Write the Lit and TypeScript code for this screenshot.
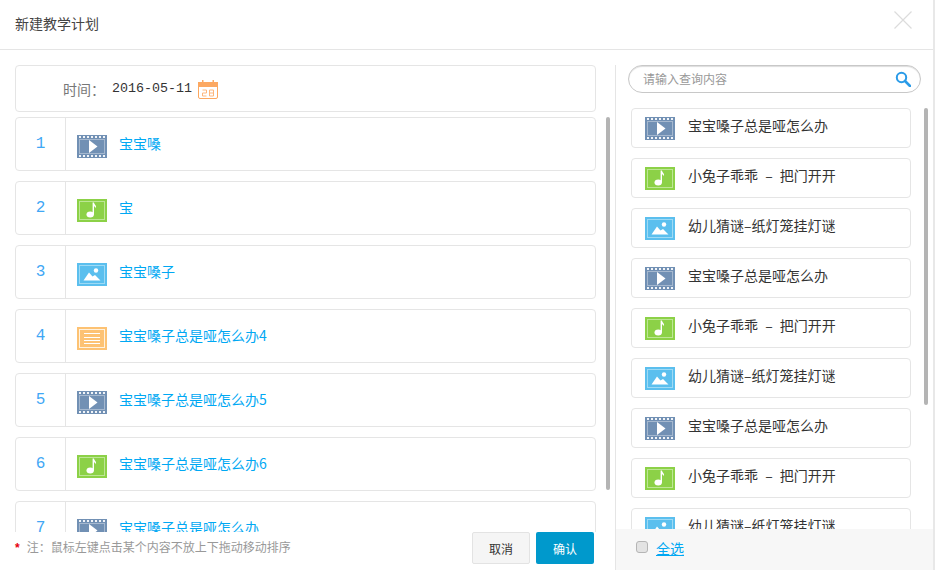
import { LitElement, html, css, svg } from "lit";
import { customElement } from "lit/decorators.js";

type Kind = "video" | "music" | "image" | "doc";

const dots = (y: number) =>
  [2, 6, 10, 14, 18, 22, 26].map((x) => svg`<rect x=${x} y=${y} width="2" height="2" fill="#fff" opacity="0.9"></rect>`);

const art: Record<Kind, unknown> = {
  video: svg`<rect width="30" height="23" fill="#7190b4"></rect>${dots(1)}${dots(20)}
    <rect x="2.5" y="4.5" width="25" height="14" fill="none" stroke="#a5b8cf"></rect>
    <path d="M12 5 L20.5 11.5 L12 18 Z" fill="#fff"></path>`,
  music: svg`<rect width="30" height="23" fill="#8cd147"></rect>
    <rect x="2.5" y="2.5" width="25" height="18" fill="none" stroke="#bde695"></rect>
    <ellipse cx="13.2" cy="15.6" rx="3.7" ry="3" fill="#fff"></ellipse>
    <path d="M15.6 15.5 L15.6 3.5 L17 3.5 C17.2 5.6 19.6 6 19 9.2 C18.4 8 17.8 7.4 17 7.2 L17 15.5 Z" fill="#fff"></path>`,
  image: svg`<rect width="30" height="23" fill="#5bbfee"></rect>
    <rect x="2.5" y="2.5" width="25" height="18" fill="none" stroke="#9ddaf5"></rect>
    <circle cx="19" cy="7.5" r="2.2" fill="#fff"></circle>
    <path d="M6.5 17.5 L12 9.5 L15.5 13.5 L18 12 L23.5 17.5 Z" fill="#fff"></path>`,
  doc: svg`<rect width="30" height="23" fill="#fdc273"></rect>
    <rect x="2.5" y="2.5" width="25" height="18" fill="none" stroke="#fff2df"></rect>
    <path d="M7 6.5 H23 M7 10.5 H23 M7 13.5 H23 M7 16.5 H23" stroke="#fff" stroke-width="1" fill="none"></path>`,
};

const left: { n: number; kind: Kind; text: string }[] = [
  { n: 1, kind: "video", text: "宝宝嗓" },
  { n: 2, kind: "music", text: "宝" },
  { n: 3, kind: "image", text: "宝宝嗓子" },
  { n: 4, kind: "doc", text: "宝宝嗓子总是哑怎么办4" },
  { n: 5, kind: "video", text: "宝宝嗓子总是哑怎么办5" },
  { n: 6, kind: "music", text: "宝宝嗓子总是哑怎么办6" },
  { n: 7, kind: "video", text: "宝宝嗓子总是哑怎么办" },
];

const group: { kind: Kind; text: string }[] = [
  { kind: "video", text: "宝宝嗓子总是哑怎么办" },
  { kind: "music", text: "小兔子乖乖 – 把门开开" },
  { kind: "image", text: "幼儿猜谜–纸灯笼挂灯谜" },
];
const right = [...group, ...group, ...group];

@customElement("app-root")
export class AppRoot extends LitElement {
  static styles = css`
    :host {
      display: block;
      width: 935px;
      height: 570px;
      overflow: hidden;
      background: #fff;
      font-family: "Noto Sans CJK SC", "Liberation Sans", sans-serif;
      font-size: 14px;
      color: #333;
    }
    .dialog {
      width: 933px;
      height: 570px;
      border-right: 2px solid #e8e8e8;
      display: flex;
      flex-direction: column;
    }
    .head {
      height: 49px;
      flex: none;
      border-bottom: 1px solid #e5e5e5;
      padding: 0 21px 0 15px;
      display: flex;
      align-items: center;
      justify-content: space-between;
    }
    .title {
      font-size: 14px;
      color: #444;
      margin-bottom: 4px;
    }
    .close {
      display: block;
      margin-bottom: 10px;
    }
    .body {
      flex: 1;
      min-height: 0;
      display: flex;
    }
    .main {
      width: 615px;
      flex: none;
      padding: 15px 0 0 15px;
      box-sizing: border-box;
      position: relative;
      display: flex;
      flex-direction: column;
    }
    .time {
      width: 581px;
      height: 47px;
      flex: none;
      box-sizing: border-box;
      border: 1px solid #e5e5e5;
      border-radius: 4px;
      display: flex;
      align-items: center;
      padding-left: 47px;
      color: #777;
      margin-bottom: 5px;
    }
    .date {
      font-family: "Liberation Mono", monospace;
      font-size: 13.33px;
      color: #333;
      margin-left: 7px;
    }
    .cal {
      margin: 2px 0 0 6px;
      display: block;
    }
    .rows {
      height: 415px;
      flex: none;
      overflow: hidden;
      display: flex;
      flex-direction: column;
      gap: 10px;
    }
    .row {
      width: 581px;
      height: 54px;
      flex: none;
      box-sizing: border-box;
      border: 1px solid #e5e5e5;
      border-radius: 4px;
      display: flex;
      align-items: center;
    }
    .num {
      width: 50px;
      height: 100%;
      box-sizing: border-box;
      border-right: 1px solid #e5e5e5;
      display: flex;
      align-items: center;
      justify-content: center;
      font-family: "Liberation Mono", monospace;
      font-size: 16px;
      color: #3fa7f5;
      flex: none;
    }
    .icon {
      display: block;
      flex: none;
    }
    .row .icon {
      margin: 5px 0 0 11px;
    }
    .row .label {
      margin: -2px 0 0 12px;
      color: #00a8f3;
      font-size: 14px;
    }
    .foot {
      flex: 1;
      display: flex;
      align-items: flex-start;
      padding-right: 21px;
    }
    .note {
      flex: 1;
      font-size: 12px;
      color: #999;
      margin-top: 6px;
      line-height: 18px;
    }
    .star {
      color: #e60012;
      margin-right: 7px;
      font-family: "Liberation Sans", sans-serif;
      font-weight: 700;
    }
    .btn {
      width: 58px;
      height: 32px;
      box-sizing: border-box;
      border-radius: 2px;
      font-size: 12px;
      display: flex;
      align-items: center;
      justify-content: center;
    }
    .cancel {
      background: #f5f5f5;
      border: 1px solid #e3e3e3;
      color: #333;
      margin-right: 6px;
    }
    .ok {
      background: #0099cc;
      color: #fff;
    }
    .thumb {
      position: absolute;
      width: 4px;
      border-radius: 2px;
      background: #b4b4b4;
    }
    .thumb.l {
      left: 606px;
      top: 67px;
      height: 373px;
    }
    .thumb.r {
      left: 308px;
      top: 43px;
      height: 297px;
    }
    .side {
      flex: 1;
      margin-top: 15px;
      border-left: 1px solid #e5e5e5;
      position: relative;
      display: flex;
      flex-direction: column;
      min-width: 0;
    }
    .search {
      width: 293px;
      height: 28px;
      flex: none;
      box-sizing: border-box;
      margin-left: 12px;
      border: 1px solid #c8c8c8;
      border-radius: 14px;
      box-shadow: inset 0 1px 1px #ddd;
      display: flex;
      align-items: center;
      justify-content: space-between;
      padding: 0 9px 0 14px;
      font-size: 12px;
      color: #999;
    }
    .search span {
      margin-bottom: 2px;
    }
    .list {
      height: 421px;
      flex: none;
      overflow: hidden;
      margin: 15px 0 0 15px;
      display: flex;
      flex-direction: column;
      gap: 10px;
    }
    .item {
      width: 280px;
      height: 40px;
      flex: none;
      box-sizing: border-box;
      border: 1px solid #e5e5e5;
      border-radius: 4px;
      display: flex;
      align-items: center;
      padding-left: 13px;
    }
    .item .icon {
      margin-top: 1px;
    }
    .item .label {
      margin: -6px 0 0 13px;
      color: #333;
      font-size: 14px;
      word-spacing: 4px;
    }
    .bar {
      flex: 1;
      background: #f7f7f7;
      display: flex;
      align-items: center;
      padding-left: 20px;
      gap: 8px;
    }
    .check {
      width: 12px;
      height: 12px;
      box-sizing: border-box;
      border: 1px solid #b5b5b5;
      border-radius: 3px;
      background: #e3e3e3;
      margin-top: -6px;
    }
    .all {
      color: #00a8f3;
      text-decoration: underline;
      font-size: 14px;
      margin-top: -3px;
    }
  `;

  private icon(kind: Kind) {
    return html`<svg class="icon" width="30" height="23" viewBox="0 0 30 23">${art[kind]}</svg>`;
  }

  render() {
    return html`
      <div class="dialog">
        <div class="head">
          <div class="title">新建教学计划</div>
          <svg class="close" width="18" height="18" viewBox="0 0 18 18">
            <path d="M0.5 0.5 L17.5 17.5 M17.5 0.5 L0.5 17.5" stroke="#dcdcdc" stroke-width="1.2" fill="none"></path>
          </svg>
        </div>
        <div class="body">
          <div class="main">
            <div class="time">
              <span>时间：</span><span class="date">2016-05-11</span>
              <svg class="cal" width="20" height="19" viewBox="0 0 20 19">
                <rect x="0.5" y="2.5" width="19" height="16" rx="1.5" fill="#fff" stroke="#fca861"></rect>
                <rect x="0" y="2" width="20" height="5" fill="#fca861"></rect>
                <rect x="4" y="0" width="1.5" height="4" fill="#fca861"></rect>
                <rect x="14.5" y="0" width="1.5" height="4" fill="#fca861"></rect>
                <path d="M4.5 10 H8.5 V13 H4.5 V16 H8.5 M11.5 10 H15.5 V16 H11.5 Z M11.5 13 H15.5" stroke="#fdb67c" fill="none"></path>
              </svg>
            </div>
            <div class="rows">
              ${left.map(
                (r) => html`<div class="row">
                  <div class="num">${r.n}</div>
                  ${this.icon(r.kind)}
                  <span class="label">${r.text}</span>
                </div>`
              )}
            </div>
            <div class="foot">
              <div class="note"><span class="star">*</span>注：鼠标左键点击某个内容不放上下拖动移动排序</div>
              <div class="btn cancel">取消</div>
              <div class="btn ok">确认</div>
            </div>
            <div class="thumb l"></div>
          </div>
          <div class="side">
            <div class="search">
              <span>请输入查询内容</span>
              <svg width="16" height="16" viewBox="0 0 16 16">
                <circle cx="6.5" cy="6.5" r="4.7" fill="none" stroke="#2a9be8" stroke-width="2"></circle>
                <path d="M10 10 L15 15" stroke="#2a9be8" stroke-width="2.6" stroke-linecap="round"></path>
              </svg>
            </div>
            <div class="list">
              ${right.map(
                (r) => html`<div class="item">
                  ${this.icon(r.kind)}
                  <span class="label">${r.text}</span>
                </div>`
              )}
            </div>
            <div class="bar">
              <span class="check"></span>
              <span class="all">全选</span>
            </div>
            <div class="thumb r"></div>
          </div>
        </div>
      </div>
    `;
  }
}
